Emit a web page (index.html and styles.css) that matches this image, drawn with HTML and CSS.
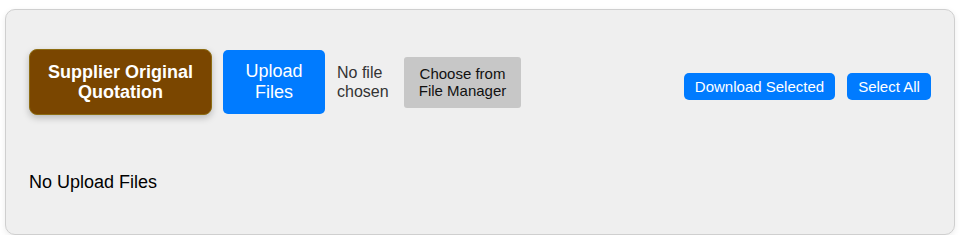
FILE: index.html
```html
<!DOCTYPE html>
<html>
<head>
<meta charset="utf-8">
<link rel="stylesheet" href="styles.css">
</head>
<body>
<div class="panel">
  <div class="toolbar">
    <div class="left">
      <button class="btn-brown">Supplier Original<br>Quotation</button>
      <button class="btn-upload">Upload<br>Files</button>
      <span class="nofile">No file<br>chosen</span>
      <button class="btn-grey">Choose from<br>File Manager</button>
    </div>
    <div class="right">
      <button class="btn-small btn-download">Download Selected</button>
      <button class="btn-small btn-select">Select All</button>
    </div>
  </div>
  <div class="empty">No Upload Files</div>
</div>
</body>
</html>
```
FILE: styles.css
```css
html, body {
  margin: 0;
  padding: 0;
  background: #ffffff;
  font-family: "Liberation Sans", Arial, sans-serif;
}
.panel {
  margin: 9px 6px 0 5px;
  height: 224px;
  box-sizing: content-box;
  border: 1px solid #cfcfcf;
  border-radius: 10px;
  background: #efefef;
  box-shadow: 0 2px 6px rgba(0, 0, 0, 0.08);
  padding: 0 23px;
  display: flex;
  flex-direction: column;
}
.toolbar {
  margin-top: 39px;
  display: flex;
  justify-content: space-between;
  align-items: center;
}
.left {
  display: flex;
  align-items: center;
}
button {
  font-family: "Liberation Sans", Arial, sans-serif;
  cursor: pointer;
  margin: 0;
}
.btn-brown {
  width: 183px;
  height: 66px;
  background: #7a4600;
  border: 1px solid #8d6c12;
  border-radius: 8px;
  color: #ffffff;
  font-size: 18px;
  font-weight: bold;
  line-height: 20px;
  padding: 0;
  box-shadow: 0 3px 7px rgba(0, 0, 0, 0.22);
}
.btn-upload {
  margin-left: 11px;
  width: 102px;
  height: 64px;
  background: #007bff;
  border: none;
  border-radius: 5px;
  color: #ffffff;
  font-size: 18px;
  line-height: 21px;
  padding: 0;
}
.nofile {
  margin-left: 12px;
  width: 52px;
  font-size: 16px;
  line-height: 19px;
  color: #333333;
}
.btn-grey {
  margin-left: 15px;
  width: 117px;
  height: 51px;
  background: #c7c7c7;
  border: none;
  border-radius: 3px;
  color: #111111;
  font-size: 15px;
  line-height: 17px;
  padding: 0;
}
.right {
  display: flex;
  gap: 12px;
  margin-top: 9px;
}
.btn-small {
  height: 27px;
  background: #007bff;
  border: none;
  border-radius: 5px;
  color: #ffffff;
  font-size: 15px;
  line-height: 17px;
  padding: 0;
  white-space: nowrap;
}
.btn-download {
  width: 151px;
}
.btn-select {
  width: 84px;
}
.empty {
  margin-top: 57px;
  font-size: 18px;
  line-height: 21px;
  color: #000000;
}
```
